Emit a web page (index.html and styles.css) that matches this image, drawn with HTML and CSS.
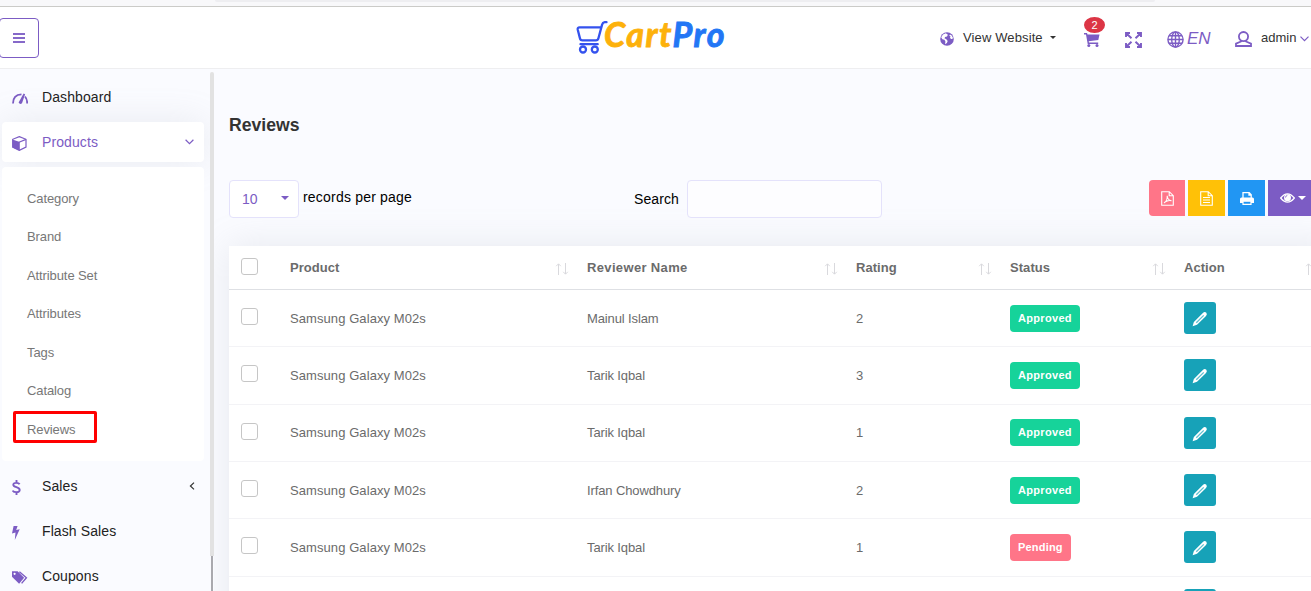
FILE: index.html
```html
<!DOCTYPE html>
<html lang="en">
<head>
<meta charset="utf-8">
<title>Reviews</title>
<link rel="stylesheet" href="styles.css">
</head>
<body>
<svg class="defs" width="0" height="0">
  <symbol id="pencil" viewBox="0 0 16 16"><path d="M.6 15.200 1.900 10.900 10.900 2Q12.600.400 14.300 1.700 15.600 3.300 14 5L5 13.700Z" fill="#fff"/><path d="M4.300 11.700 11.700 4.400" stroke="#5fc0d0" stroke-width="1.300"/></symbol>
  <symbol id="sort" viewBox="0 0 14 12"><path d="M3.500 12V1M1.200 3.200 3.500.8 5.800 3.200M10.500 0v11M8.200 8.800l2.300 2.400 2.300-2.400" fill="none" stroke="#d9d9dd"/></symbol>
</svg>
<div class="chrome"><div class="chrome-bar"></div></div>
<header class="header">
  <button class="toggle"><svg width="12" height="10" viewBox="0 0 12 10" shape-rendering="crispEdges"><path d="M0 0h12v2H0zM0 4h12v2H0zM0 8h12v2H0z" fill="#7c5cc4" fill-opacity=".92"/></svg></button>
  <div class="logo">
    <svg width="32" height="34" viewBox="0 0 32 34" fill="none" stroke="#3452ee" stroke-width="2.300" stroke-linecap="round" stroke-linejoin="round"><path d="M30.500 2.200h-1.800q-2 .2-2.600 2.400L22.500 18q-.6 2.400-2.700 2.400H6.500q-2.200 0-2.600-2.300L1.700 9.500Q1.400 7.400 3.500 7.400h21.500M4.500 24.200h17.200"/><circle cx="7" cy="29.500" r="3"/><circle cx="18.800" cy="29.500" r="3"/></svg>
    <span class="logo-text"><span class="gold">Cart</span><span class="blue">Pro</span></span>
  </div>
  <nav class="tools">
    <a class="tool website"><svg width="14" height="14" viewBox="0 0 14 14"><circle cx="7" cy="7" r="6.800" fill="#7c5cc4"/><path d="M5.800 1.200 3 2.500 1.200 5.200l1.200 2 2 .6 1 1.600-.3 2.800 1.800-1.300.8-2-1.600-1.800-1.500-.7.4-1.300 2-.6.9-1.800zM10 2.500l-.7 1.200 1.300.8-.6 1.200 1 1.200 1.400.2.500-1.400-1.200-2.300z" fill="#fff"/></svg><span>View Website</span><i class="caret small"></i></a>
    <a class="tool cart"><svg width="16" height="14" viewBox="0 0 16 14"><path d="M0 0h3l.5 1.500H15.500L14.300 7 4.700 8.200 5 9.500h9.200V11H3.700L2 1.500H0z" fill="#7c5cc4"/><circle cx="4.800" cy="12.400" r="1.500" fill="#7c5cc4"/><circle cx="13" cy="12.400" r="1.500" fill="#7c5cc4"/></svg><span class="count">2</span></a>
    <a class="tool"><svg class="expand" width="17" height="16" viewBox="0 0 17 16" fill="none" stroke="#7c5cc4" stroke-width="1.900"><path d="M1 5V1h4M12 1h4v4M16 11v4h-4M5 15H1v-4M1.500 1.500l5 4.800M15.500 1.500l-5 4.800M15.500 14.500l-5-4.800M1.500 14.500l5-4.800"/></svg></a>
    <a class="tool lang"><svg width="17" height="17" viewBox="0 0 17 17" fill="none" stroke="#7c5cc4" stroke-width="1.400"><circle cx="8.500" cy="8.500" r="7.600"/><ellipse cx="8.500" cy="8.500" rx="3.800" ry="7.600"/><path d="M8.500 1v15M1 8.500h15M2 4.800h13M2 12.200h13"/></svg><em>EN</em></a>
    <a class="tool user"><svg width="17" height="16" viewBox="0 0 17 16" fill="none" stroke="#7c5cc4" stroke-width="1.800"><circle cx="8.500" cy="5.600" r="4.600"/><path d="M6 9.500v1L1 12.600V15h15v-2.400l-5-2.100v-1"/></svg><span>admin</span><svg class="chev" width="9" height="6" viewBox="0 0 9 6"><path d="M.5.700l4 4 4-4" fill="none" stroke="#7c5cc4" stroke-width="1.200"/></svg></a>
  </nav>
</header>
<div class="page">
  <aside class="sidebar">
    <a class="item"><svg width="16" height="11" viewBox="0 0 16 11" fill="none" stroke="#7c5cc4"><path d="M1 10.500C1 5 4 1.500 9.500 1.300M13 3.500C14.600 5.200 15.200 7.500 15.200 10.500" stroke-width="1.800"/><path d="M4.500 10.500C4.500 7.500 5.500 5 7.500 3.500" stroke-width="0"/><path d="M6.600 9.600 11.600.600l1.500.6L10 10.200Q8 12 6.600 9.600z" fill="#7c5cc4" stroke="none"/></svg><span>Dashboard</span></a>
    <a class="item active"><svg width="15" height="15" viewBox="0 0 15 15"><path d="M7.300.6 14 3.300v7.800l-6.700 3.300L.7 11.100V3.300z" fill="#fff" stroke="#7c5cc4" stroke-width="1.200"/><path d="M.5 3.400 7.800 6v8.600L.5 11.400z" fill="#7c5cc4"/><path d="M7 6.200l7-2.800" stroke="#7c5cc4" stroke-width="1.200"/></svg><span>Products</span><svg class="arrow" width="9" height="6" viewBox="0 0 9 6"><path d="M.6.800l3.900 3.800L8.400.8" fill="none" stroke="#7c5cc4" stroke-width="1.200"/></svg></a>
    <div class="submenu">
      <a>Category</a><a>Brand</a><a>Attribute Set</a><a>Attributes</a><a>Tags</a><a>Catalog</a><a class="marked">Reviews</a>
    </div>
    <a class="item"><svg width="9" height="15" viewBox="0 0 9 15" fill="none" stroke="#7c5cc4" stroke-width="1.900"><path d="M7.600 4.200C6.800 2.700 1.300 2 1.300 4.700c0 3 6.400 2 6.400 5.300 0 3-6.200 2.500-7 .5M4.500 0v2.800M4.500 12v3"/></svg><span>Sales</span><svg class="arrow" width="6" height="8" viewBox="0 0 6 8"><path d="M5 .6 1.400 4 5 7.400" fill="none" stroke="#333" stroke-width="1.200"/></svg></a>
    <a class="item"><svg width="8" height="14" viewBox="0 0 8 14"><path d="M1.600 0h4L4.200 4l3.500-.8L2.800 14 3.500 6.500 0 7.400z" fill="#7c5cc4"/></svg><span>Flash Sales</span></a>
    <a class="item"><svg width="16" height="13" viewBox="0 0 16 13"><path d="M0 .3h5.600l6.500 6.400-5 6L0 5.800z" fill="#7c5cc4"/><circle cx="2.600" cy="2.800" r="1.100" fill="#fff"/><path d="M7.400.700l7 6.100-4.800 5.600" fill="none" stroke="#7c5cc4" stroke-width="1.400"/></svg><span>Coupons</span></a>
  </aside>
  <div class="rail"><div class="rail-light"></div><div class="rail-dark"></div></div>
  <main class="main">
    <h1>Reviews</h1>
    <div class="controls">
      <div class="select"><span>10</span><i class="caret"></i></div>
      <span class="records">records per page</span>
      <label class="search">Search<input type="text"></label>
      <div class="exports">
        <button class="pdf"><svg width="13" height="15" viewBox="0 0 13 15" fill="none" stroke="#fff" stroke-width="1.100"><path d="M.7.700h7.600l4 4v9.600H.7zM8.200.700v4.100h4M3 12c2-1 3.400-4.400 3.200-7.200C6.400 7.500 8 9.500 10.500 9.800 8 9 4.500 10 3 12"/></svg></button>
        <button class="csv"><svg width="13" height="15" viewBox="0 0 13 15" fill="none" stroke="#fff" stroke-width="1.100"><path d="M.7.700h7.600l4 4v9.600H.7zM8.200.700v4.100h4M3 6.500h7M3 9h7M3 11.500h7"/></svg></button>
        <button class="print"><svg width="14" height="13" viewBox="0 0 14 13"><path d="M3 6V.7h6.200L11.200 2.700V6M9 1v2h2" fill="none" stroke="#fff" stroke-width="1.300"/><path d="M1.500 5.500h11Q14 5.800 14 7v4H0V7Q0 5.700 1.500 5.500z" fill="#fff"/><path d="M3 9.200h8v3.100H3z" fill="#2196f3" stroke="#fff" stroke-width="1.200"/></svg></button>
        <button class="view"><svg width="15" height="10" viewBox="0 0 15 10"><path d="M.7 5Q7.500-3.300 14.300 5 7.500 13.300.7 5z" fill="none" stroke="#fff" stroke-width="1.300"/><circle cx="7.500" cy="4.700" r="3.500" fill="#fff"/><path d="M5.500 4.500q0-1.800 1.800-2" fill="none" stroke="#7c5cc4" stroke-width=".8"/></svg><i class="caret white"></i></button>
      </div>
    </div>
    <div class="table">
      <div class="row head"><div><i class="check"></i></div><div>Product<svg class="sort"><use href="#sort"/></svg></div><div class="name">Reviewer Name<svg class="sort"><use href="#sort"/></svg></div><div>Rating<svg class="sort"><use href="#sort"/></svg></div><div>Status<svg class="sort"><use href="#sort"/></svg></div><div>Action<svg class="sort"><use href="#sort"/></svg></div></div>
      <div class="row"><div><i class="check"></i></div><div>Samsung Galaxy M02s</div><div class="name">Mainul Islam</div><div>2</div><div><b class="badge">Approved</b></div><div><button class="edit"><svg width="16" height="16"><use href="#pencil"/></svg></button></div></div>
      <div class="row"><div><i class="check"></i></div><div>Samsung Galaxy M02s</div><div class="name">Tarik Iqbal</div><div>3</div><div><b class="badge">Approved</b></div><div><button class="edit"><svg width="16" height="16"><use href="#pencil"/></svg></button></div></div>
      <div class="row"><div><i class="check"></i></div><div>Samsung Galaxy M02s</div><div class="name">Tarik Iqbal</div><div>1</div><div><b class="badge">Approved</b></div><div><button class="edit"><svg width="16" height="16"><use href="#pencil"/></svg></button></div></div>
      <div class="row"><div><i class="check"></i></div><div>Samsung Galaxy M02s</div><div class="name">Irfan Chowdhury</div><div>2</div><div><b class="badge">Approved</b></div><div><button class="edit"><svg width="16" height="16"><use href="#pencil"/></svg></button></div></div>
      <div class="row"><div><i class="check"></i></div><div>Samsung Galaxy M02s</div><div class="name">Tarik Iqbal</div><div>1</div><div><b class="badge pending">Pending</b></div><div><button class="edit"><svg width="16" height="16"><use href="#pencil"/></svg></button></div></div>
      <div class="row"><div></div><div></div><div></div><div></div><div></div><div><button class="edit"></button></div></div>
    </div>
  </main>
</div>
</body>
</html>
```
FILE: styles.css
```css
*, *::after { box-sizing: border-box; }
html, body { margin: 0; height: 591px; overflow: hidden; }
body { width: 1311px; background: #fafbff; font: 14px "Liberation Sans", Arial, sans-serif; color: #333; }
button { border: 0; padding: 0; display: flex; align-items: center; justify-content: center; }
svg { display: block; flex: none; }
.defs { position: absolute; }

.chrome { height: 7px; background: #f8f8fa; border-bottom: 1px solid #cbcbc8; }
.chrome-bar { height: 2px; width: 940px; margin-left: 215px; background: #eeeef1; border-radius: 0 0 3px 3px; }
.header { height: 62px; background: #fff; border-bottom: 1px solid #eeeef0; display: flex; }
.toggle { width: 40px; height: 40px; margin: 11px 0 0 -1px; border: 1px solid #7c5cc4; border-radius: 4px; background: #fff; }
.logo { display: flex; margin: 13px 0 0 536px; width: 160px; }
.logo svg { margin-left: 1px; }
.logo-text { font: italic 700 34px/34px Lato, sans-serif; -webkit-text-stroke: .9px; letter-spacing: 1.5px; margin: -3px 0 0 -4px; white-space: nowrap; }
.gold { color: #fdb10b; }
.blue { color: #2276f5; }
.tools { display: flex; margin-left: auto; width: 371px; height: 61px; align-items: center; font-size: 13px; flex: none; }
.tool { display: flex; align-items: center; position: relative; }
.website { letter-spacing: .12px; width: 144px; }
.website svg { margin: 3px 9px 0 0; }
.website .caret { margin-left: 7px; }
.cart { width: 41px; }
.cart svg { margin-top: 4px; }
.count { position: absolute; left: 0; top: -12px; width: 21px; height: 16px; border-radius: 50%; background: #dc3545; color: #fff; font-size: 11px; line-height: 16px; text-align: center; }
.expand { margin: 4px 25px 0 0; }
.lang { width: 68px; color: #7c5cc4; }
.lang svg { margin-top: 3px; }
.lang em { font-size: 17px; margin: 2px 0 0 3px; }
.user svg { margin-top: 3px; }
.user span { margin-left: 9px; }
.user .chev { margin: 3px 0 0 4px; }
.caret { border: 4px solid transparent; border-top-color: #7c5cc4; border-bottom: 0; }
.caret.small { border-width: 3px 3px 0; border-top-color: #333; }
.caret.white { border-top-color: #fff; }

.page { display: flex; height: 522px; }
.sidebar { width: 210px; padding: 8px 6px 0 2px; overflow: hidden; flex: none; }
.item { display: flex; height: 40px; align-items: center; margin-bottom: 5px; padding-left: 10px; position: relative; color: #222; letter-spacing: .1px; }
.item > svg:first-child { margin-top: 3px; }
.item span { position: absolute; left: 40px; top: 12px; line-height: 16px; }
.item .arrow { margin: 0 10px 0 auto; }
.item .arrow[width="6"] { margin-right: 9px; }
.active, .submenu { background: #fff; border-radius: 4px; }
.active { color: #7c5cc4; box-shadow: 0 0 35px rgba(154,161,171,.18); }
.submenu { position: relative; height: 294px; padding-top: 12px; margin-bottom: 5px; }
.submenu a { display: block; height: 38.45px; line-height: 39.4px; padding-left: 25px; font-size: 13px; letter-spacing: -.1px; color: #777; position: relative; }
.submenu .marked::after { content: ""; position: absolute; left: 11px; top: 1px; width: 84px; height: 32px; border: 3px solid #f00; border-radius: 2px; }
.rail { width: 4px; padding-top: 3px; flex: none; }
.rail-light { height: 484px; background: #e2e2e2; border-radius: 2px 2px 0 0; }
.rail-dark { height: 35px; width: 2px; margin-left: 1px; background: #a9a9ae; }
.main { width: 1097px; padding-left: 15px; overflow: hidden; flex: none; }
h1 { margin: 0; padding-top: 45px; height: 111px; font-size: 17.6px; line-height: 22px; }
.controls { display: flex; height: 66px; width: 1090px; color: #000; }
.controls > * { flex: none; }
.select { width: 70px; height: 38px; background: #fff; border: 1px solid #e4e2fb; border-radius: 4px; display: flex; align-items: center; padding: 0 9px 0 12px; color: #7c5cc4; }
.select .caret { margin: -3px 0 0 auto; }
.records { margin: 9px 0 0 4px; width: 331px; letter-spacing: .2px; }
.search { display: flex; line-height: 38px; width: 515px; letter-spacing: .1px; }
.search input { width: 195px; height: 38px; margin-left: 8px; border: 1px solid #e4e2fb; background: #fdfdff; border-radius: 4px; }
.exports { display: flex; gap: 3px; height: 36px; }
.exports button { width: 37px; flex: none; }
.exports .pdf { width: 36px; background: #ff7588; border-radius: 4px 0 0 4px; }
.exports .csv { background: #ffc107; }
.exports .print { background: #2196f3; }
.exports .view { width: 50px; background: #7c5cc4; gap: 3px; }
.table { width: 1108px; background: #fff; box-shadow: 0 0 35px rgba(154,161,171,.2); }
.row { display: grid; grid-template-columns: 61px 297px 269px 154px 174px 153px; height: 57.33px; align-items: center; border-bottom: 1px solid #f3f3f6; font-size: 13px; color: #6b6b6b; letter-spacing: .08px; }
.row > div { display: flex; align-items: center; }
.row .name { letter-spacing: -.12px; }
.head { height: 44px; border-bottom-color: #dee0e4; font-weight: bold; letter-spacing: .05px; }
.head .name { letter-spacing: .35px; }
.check { width: 17px; height: 17px; margin: -3px 0 0 12px; border: 1px solid #c6c6c6; border-radius: 3px; background: #fff; }
.sort { width: 14px; height: 12px; margin: 3px 18px 0 auto; }
.badge { background: #16d39a; color: #fff; border-radius: 4px; font-size: 11px; line-height: 27px; padding: 0 8px; letter-spacing: .32px; }
.pending { background: #ff7588; letter-spacing: .2px; }
.edit { width: 32px; height: 32px; background: #17a2b8; border-radius: 3px; }
.edit svg { margin-top: 2px; }
```
